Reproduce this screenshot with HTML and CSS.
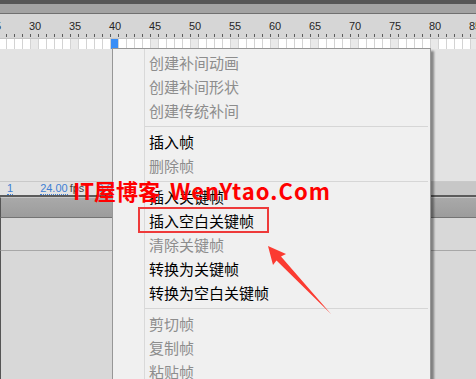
FILE: index.html
```html
<!DOCTYPE html>
<html lang="zh-CN">
<head>
<meta charset="utf-8">
<title>Timeline menu</title>
<link rel="stylesheet" href="styles.css">
</head>
<body>
<div class="app">
  <div class="topbar"></div>
  <div class="ruler">
    <div class="labels">
      <span>25</span><span>30</span><span>35</span><span>40</span><span>45</span><span>50</span><span>55</span><span>60</span><span>65</span><span>70</span><span>75</span><span>80</span><span>85</span>
    </div>
    <div class="ticks"></div>
  </div>
  <div class="frames"><div class="playhead"></div></div>
  <div class="layers"></div>
  <div class="status">
    <div class="status-left">
      <span class="num one">1</span>
      <span class="num rate">24.00</span><span class="unit">fps</span>
      <span class="num time">0.0s</span>
    </div>
    <div class="status-right"></div>
  </div>
  <div class="divider"></div>
  <div class="panel-head"></div>
  <div class="panel-a"></div>
  <div class="panel-b"></div>
</div>

<div class="menu">
  <div class="item">创建补间动画</div>
  <div class="item">创建补间形状</div>
  <div class="item">创建传统补间</div>
  <div class="sep"></div>
  <div class="item on">插入帧</div>
  <div class="item">删除帧</div>
  <div class="sep"></div>
  <div class="item on">插入关键帧</div>
  <div class="item on">插入空白关键帧</div>
  <div class="item">清除关键帧</div>
  <div class="item on">转换为关键帧</div>
  <div class="item on">转换为空白关键帧</div>
  <div class="sep"></div>
  <div class="item">剪切帧</div>
  <div class="item">复制帧</div>
  <div class="item">粘贴帧</div>
</div>

<div class="watermark"><span class="wm-cn">IT屋博客</span><span class="wm-en">WenYtao.Com</span></div>
<div class="highlight"></div>
<svg class="arrow" width="476" height="379" viewBox="0 0 476 379">
  <polygon points="268,246 286,254 281,256.5 331,314 276.5,260.5 273,265"/>
</svg>
</body>
</html>
```

FILE: styles.css
```css
* { box-sizing: border-box; margin: 0; padding: 0; }

html, body { width: 476px; height: 379px; overflow: hidden; }

body {
  position: relative;
  background: #d7d7d7;
  font-family: "Liberation Sans", Arial, sans-serif;
}

.app {
  display: flex;
  flex-direction: column;
  height: 379px;
}

.topbar {
  flex: none;
  height: 14px;
  background: linear-gradient(#565656 0 4px, #a3a3a3 4px 13px, #707070 13px 14px);
}

.ruler {
  flex: none;
  height: 24px;
  background: #d6d6d6;
  display: flex;
  flex-direction: column;
}

.labels {
  display: flex;
  margin-left: -25px;
  height: 20px;
  padding-top: 6px;
}

.labels span {
  flex: none;
  width: 40px;
  text-align: center;
  font-size: 11px;
  line-height: 13px;
  color: #262626;
}

.ticks {
  height: 3px;
  margin-bottom: 1px;
  background: repeating-linear-gradient(90deg, #5c5c5c 0 1px, transparent 1px 8px);
  background-size: 480px 100%;
  background-position: 6px 0;
}

.frames {
  flex: none;
  height: 11px;
  border-top: 1px solid #c4c4c4;
  display: flex;
  background-color: #fff;
  background-image:
    repeating-linear-gradient(90deg, #d3d3d3 0 1px, transparent 1px 8px),
    repeating-linear-gradient(90deg, #e9e9e9 0 7px, transparent 7px 40px);
  background-size: 480px 100%, 480px 100%;
  background-position: 6px 0, 31px 0;
}

.playhead {
  margin-left: 111px;
  width: 7px;
  background: #3a8ef6;
}

.layers {
  flex: none;
  height: 132px;
  background: #e3e3e3;
}

.status {
  flex: none;
  height: 14px;
  border-top: 1px solid #c9c9c9;
  display: flex;
  background: #e2e2e2;
}

.status-left {
  flex: 1;
  display: flex;
  align-items: flex-start;
  padding-left: 7px;
  font-size: 11px;
  line-height: 12px;
}

.num {
  color: #3f7fd3;
  border-bottom: 1px dotted #3f7fd3;
}

.one { margin-right: 27px; }
.unit { color: #444; margin-left: 2px; margin-right: 13px; }

.status-right {
  flex: none;
  width: 60px;
  background: #c7c7c7;
}

.divider {
  flex: none;
  height: 2px;
  background: #5b5b5b;
}

.panel-head {
  flex: none;
  height: 21px;
  border-left: 1px solid #555;
  border-top: 1px solid #c6c6c6;
  border-bottom: 1px solid #747474;
  background: linear-gradient(#a9a9a9, #9c9c9c);
}

.panel-a {
  flex: none;
  height: 33px;
  border-left: 1px solid #555;
  border-bottom: 1px solid #a7a7a7;
  background: #d8d8d8;
}

.panel-b {
  flex: 1;
  border-left: 1px solid #555;
  background: #d8d8d8;
}

/* context menu */
.menu {
  position: absolute;
  left: 112px;
  top: 48px;
  width: 319px;
  height: 345px;
  padding: 2px 0;
  border: 1px solid #979797;
  background: #f0f0f0 linear-gradient(90deg, transparent 31px, #d9d9d9 31px 32px, transparent 32px);
  box-shadow: 3px 3px 2px rgba(0, 0, 0, 0.4);
  font-family: "Noto Sans CJK SC", sans-serif;
  font-size: 15px;
}

.item {
  height: 24px;
  line-height: 24px;
  padding-left: 36px;
  color: #8d8d8d;
  white-space: nowrap;
}

.item.on { color: #000; }

.sep {
  height: 1px;
  margin: 3px 2px 3px 32px;
  background: #d6d6d6;
}

/* annotations */
.watermark {
  position: absolute;
  left: 73px;
  top: 176px;
  display: flex;
  align-items: baseline;
  gap: 10px;
  font-family: "Noto Sans CJK SC", sans-serif;
  font-weight: 700;
  font-size: 22px;
  line-height: 28px;
  color: #ff0000;
  white-space: nowrap;
}

.wm-en { letter-spacing: 1px; }

.highlight {
  position: absolute;
  left: 138px;
  top: 207px;
  width: 131px;
  height: 26px;
  border: 2px solid #ee3a3a;
}

.arrow {
  position: absolute;
  left: 0;
  top: 0;
  pointer-events: none;
}

.arrow polygon { fill: #fb3b31; }
```
